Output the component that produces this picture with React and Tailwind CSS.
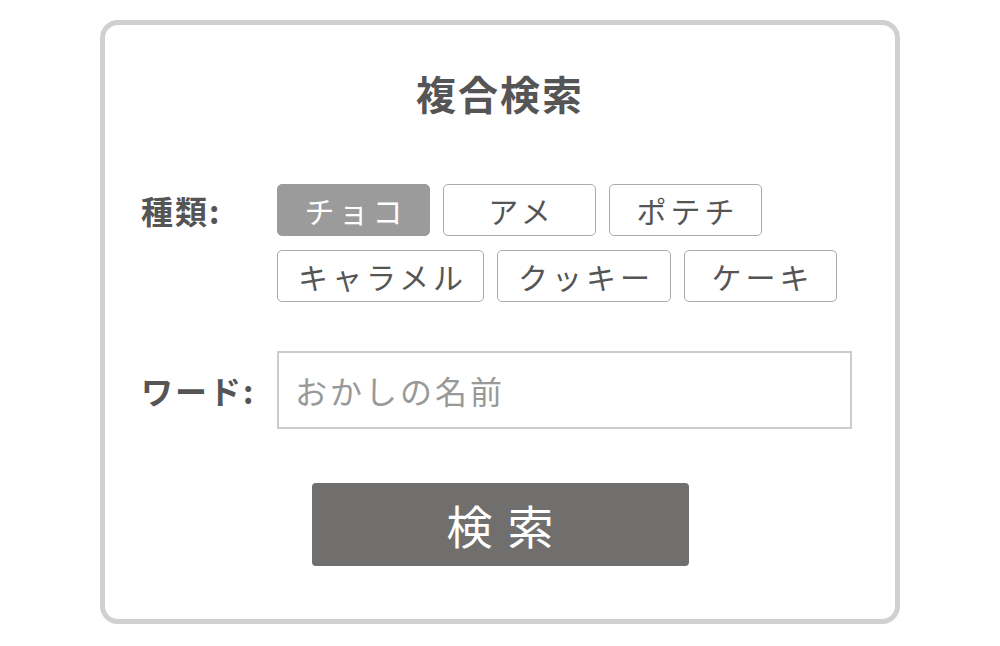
const TYPES = [
  { id: 'choco', label: 'チョコ', active: true },
  { id: 'ame', label: 'アメ' },
  { id: 'potechi', label: 'ポテチ' },
  { id: 'caramel', label: 'キャラメル' },
  { id: 'cookie', label: 'クッキー' },
  { id: 'cake', label: 'ケーキ' },
];

const font = { fontFamily: '"Noto Sans CJK JP", "Noto Sans", sans-serif' };

export default function App() {
  return (
    <div className="min-h-screen bg-white flex justify-center pt-[20px]" style={font}>
      <div className="w-[800px] h-[604px] border-[5px] border-[#d0d0d0] rounded-[18px] px-[36px] pt-[38px] flex flex-col">
        {/* タイトル */}
        <h1 className="text-center text-[40px] leading-[60px] font-bold tracking-[2px] text-[#555555]">
          複合検索
        </h1>

        {/* 種類 */}
        <div className="flex mt-[61px]">
          <div className="w-[136px] h-[52px] flex items-center text-[32px] tracking-[2px] font-bold text-[#555555]">
            種類:
          </div>
          <div className="flex flex-wrap gap-x-[13px] gap-y-[14px] w-[580px]">
            {TYPES.map((t) => (
              <button
                key={t.id}
                className={`h-[52px] min-w-[153px] pl-[20px] pr-[16px] rounded-[5px] text-[30px] leading-none tracking-[4px] ${
                  t.active
                    ? 'bg-[#9b9b9b] border border-[#9b9b9b] text-white'
                    : 'bg-white border border-[#aaaaaa] text-[#555555]'
                }`}
              >
                {t.label}
              </button>
            ))}
          </div>
        </div>

        {/* ワード */}
        <div className="flex items-center mt-[49px]">
          <div className="w-[136px] text-[32px] tracking-[2px] font-bold text-[#555555]">ワード:</div>
          <input
            type="text"
            placeholder="おかしの名前"
            className="w-[575px] h-[78px] border-2 border-[#cccccc] px-[16px] text-[32px] tracking-[3px] text-[#555555] placeholder:text-[#999999] outline-none"
          />
        </div>

        {/* 検索ボタン */}
        <div className="flex justify-center mt-[54px]">
          <button className="w-[377px] h-[83px] rounded-[4px] bg-[#706f6d] text-white text-[46px] tracking-[15px] pl-[15px]">
            検索
          </button>
        </div>
      </div>
    </div>
  );
}
